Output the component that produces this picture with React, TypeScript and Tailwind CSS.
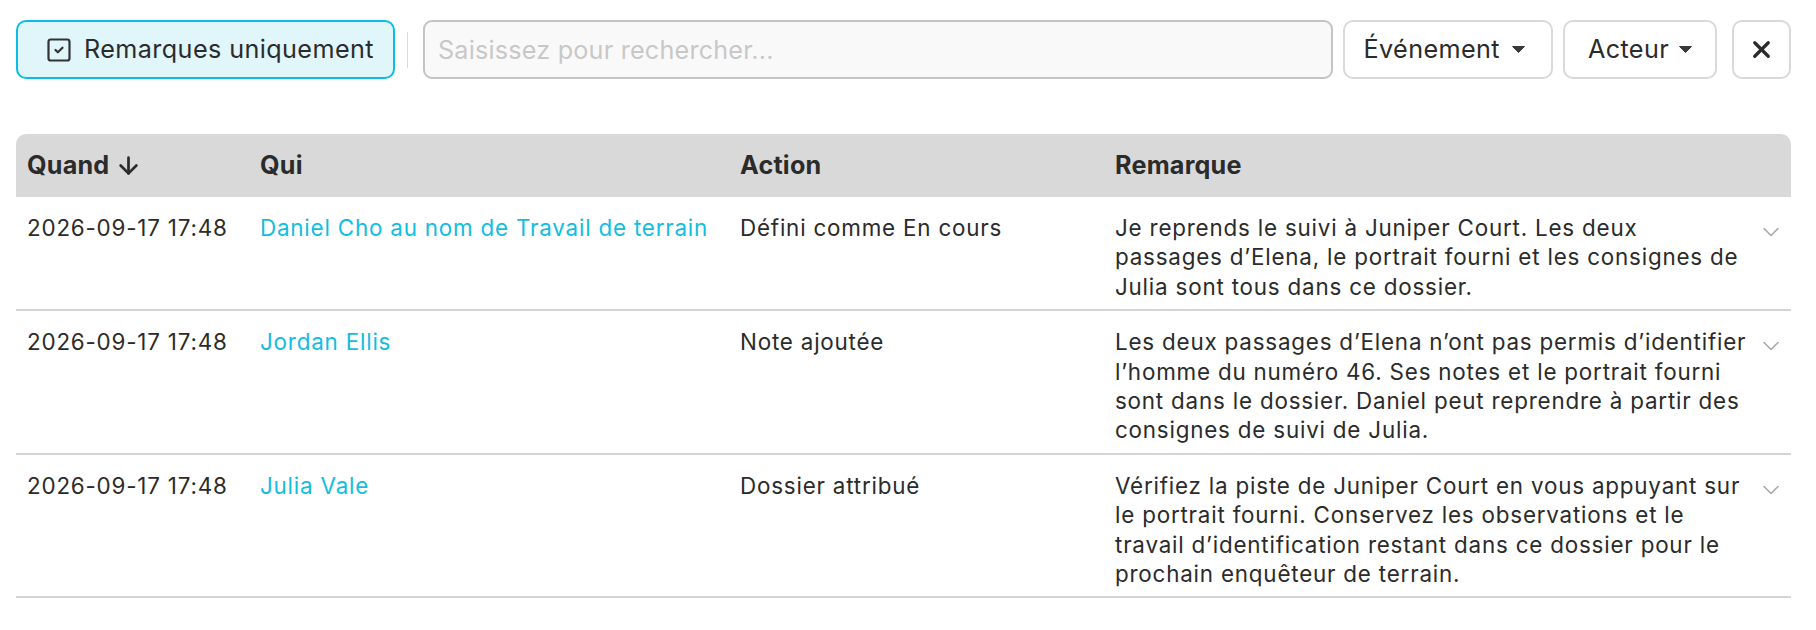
import { SquareCheck, ArrowDown, ChevronDown, X } from 'lucide-react';

const rows = [
  {
    when: '2026-09-17 17:48',
    who: 'Daniel Cho au nom de Travail de terrain',
    action: 'Défini comme En cours',
    note: [
      'Je reprends le suivi à Juniper Court. Les deux',
      'passages d’Elena, le portrait fourni et les consignes de',
      'Julia sont tous dans ce dossier.',
    ],
  },
  {
    when: '2026-09-17 17:48',
    who: 'Jordan Ellis',
    action: 'Note ajoutée',
    note: [
      'Les deux passages d’Elena n’ont pas permis d’identifier',
      'l’homme du numéro 46. Ses notes et le portrait fourni',
      'sont dans le dossier. Daniel peut reprendre à partir des',
      'consignes de suivi de Julia.',
    ],
  },
  {
    when: '2026-09-17 17:48',
    who: 'Julia Vale',
    action: 'Dossier attribué',
    note: [
      'Vérifiez la piste de Juniper Court en vous appuyant sur',
      'le portrait fourni. Conservez les observations et le',
      'travail d’identification restant dans ce dossier pour le',
      'prochain enquêteur de terrain.',
    ],
  },
];

function Caret() {
  return (
    <svg width="13" height="7" viewBox="0 0 13 7" className="shrink-0">
      <path d="M0.5 0.5h12L6.5 6.5z" fill="#3a3a3a" stroke="#3a3a3a" strokeLinejoin="round" />
    </svg>
  );
}

export default function App() {
  return (
    <div className="min-h-screen bg-white pl-4 pr-[25px] pt-[20px] font-['Inter',sans-serif] text-[#2b2b2b]">
      {/* toolbar */}
      <div className="flex h-[59px] items-center text-[25.2px] tracking-[0.4px]">
        <button className="flex h-full w-[379px] items-center gap-[11px] rounded-[10px] border-2 border-[#0abde3] bg-[#e0f6fb] pl-[27px]">
          <SquareCheck size={28} strokeWidth={1.9} className="text-[#333]" />
          <span>Remarques uniquement</span>
        </button>
        <div className="ml-[12px] h-[36px] w-px bg-[#d9d9d9]" />
        <input
          className="ml-[15px] h-full flex-1 rounded-[9px] border-2 border-[#c4c4c4] bg-[#faf9f9] px-[13px] tracking-[0.2px] outline-none placeholder:text-[#c8c8c8]"
          placeholder="Saisissez pour rechercher..."
        />
        <button className="ml-[10px] flex h-full w-[210px] items-center justify-end gap-[12px] rounded-[10px] border-2 border-[#d9d9d9] bg-white pr-[26px]">
          <span>Événement</span>
          <Caret />
        </button>
        <button className="ml-[10px] flex h-full w-[154px] items-center justify-center gap-[10px] rounded-[10px] border-2 border-[#d9d9d9] bg-white">
          <span>Acteur</span>
          <Caret />
        </button>
        <button className="ml-[15px] flex h-full w-[59px] items-center justify-center rounded-[10px] border-2 border-[#d9d9d9] bg-white">
          <X size={27} strokeWidth={2.9} className="text-[#2b2b2b]" />
        </button>
      </div>

      {/* table */}
      <div className="mt-[55px] text-[22.4px] leading-[29.4px] tracking-[0.8px]">
        <div className="grid h-[63px] grid-cols-[233px_480px_375px_minmax(0,1fr)_46px] items-center rounded-t-[10px] bg-[#d9d9d9] text-[25.2px] font-bold tracking-[0.2px]">
          <div className="flex items-center gap-[6px] px-[11px]">
            Quand
            <ArrowDown size={27} strokeWidth={2.4} />
          </div>
          <div className="px-[11px]">Qui</div>
          <div className="px-[11px]">Action</div>
          <div className="px-[11px]">Remarque</div>
          <div />
        </div>
        {rows.map((r, i) => (
          <div
            key={i}
            className="grid grid-cols-[233px_480px_375px_minmax(0,1fr)_46px] border-b-2 border-[#d4d4d4] pt-[16px] pb-[8px]"
          >
            <div className="px-[11px]">{r.when}</div>
            <div className="px-[11px] text-[#12bde2]">{r.who}</div>
            <div className="px-[11px]">{r.action}</div>
            <div className="whitespace-nowrap px-[11px]">
              {r.note.map((l, j) => (
                <div key={j}>{l}</div>
              ))}
            </div>
            <div className="flex justify-end pr-[6px] pt-[5px]">
              <ChevronDown size={28} strokeWidth={1.4} className="text-[#a9a9a9]" />
            </div>
          </div>
        ))}
      </div>
    </div>
  );
}
